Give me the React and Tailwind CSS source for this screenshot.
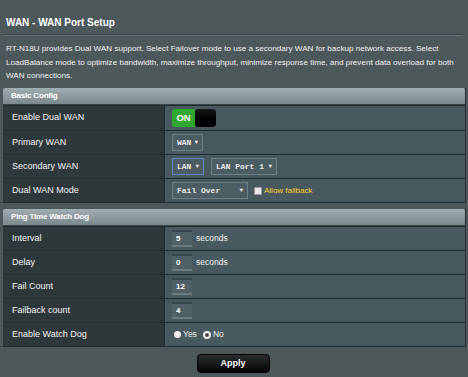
import React from "react";

function Row({ label, children, h = "h-[24px]" }) {
  return (
    <div className={`flex ${h} border-t border-[#222b2e]`}>
      <div className="w-[162px] shrink-0 bg-[#2e383b] flex items-center pl-[9px] text-[9px] text-[#f2f2f2] border-r border-[#222b2e]">
        {label}
      </div>
      <div className="flex-1 bg-[#485a5f] flex items-center pl-[7px] gap-[7px]">{children}</div>
    </div>
  );
}

function Header({ title }) {
  return (
    <div className="h-[17px] bg-gradient-to-b from-[#a0adb1] to-[#7b898d] flex items-center pl-[8px] text-[8px] tracking-[-0.2px] font-bold text-white rounded-t-[2px] border-b border-[#3a4447]">
      {title}
    </div>
  );
}

const Sel = ({ children, w, blue }) => (
  <div
    className={`h-[17px] ${w} ${blue ? "border-[#5c86c4]" : "border-[#6e8086]"} border bg-[#4c5e63] flex items-center justify-between pl-[4px] pr-[4px] font-['Liberation_Mono'] text-[8px] font-bold text-[#e8e8e8] whitespace-nowrap`}
  >
    <span>{children}</span>
    <span className="text-[6px]">▼</span>
  </div>
);

const Inp = ({ v }) => (
  <div className="h-[17px] w-[20px] bg-[#4f6166] border-t-2 border-t-[#37464a] border-b-2 border-b-[#6b7c80] flex items-center pl-[4px] text-[8px] font-bold text-white">
    {v}
  </div>
);

export default function App() {
  return (
    <div className="w-[468px] h-[377px] bg-[#4d585b] font-['Liberation_Sans',Arial,sans-serif] text-white overflow-hidden">
      <div className="pt-[17px] pl-[6px] text-[10px] font-bold leading-[12px] h-[34px]">WAN - WAN Port Setup</div>
      <div className="mx-[5px] h-[2px] bg-[#3a4447] border-b border-[#6a7478]"></div>
      <div className="pl-[6px] pt-[6px] text-[8.1px] leading-[13.5px] text-[#f0f0f0] h-[52px] whitespace-nowrap">
        RT-N18U provides Dual WAN support. Select Failover mode to use a secondary WAN for backup network access. Select
        <br />
        LoadBalance mode to optimize bandwidth, maximize throughput, minimize response time, and prevent data overload for both
        <br />
        WAN connections.
      </div>

      <div className="ml-[3px] w-[463px] border-r border-b border-[#222b2e]">
        <Header title="Basic Config" />
        <Row label="Enable Dual WAN" h="h-[25px]">
          <div className="flex h-[18px] w-[44px] rounded-[3px] overflow-hidden">
            <div className="w-[23px] bg-[#2fa82f] flex items-center justify-center text-[9.5px] font-bold text-white">ON</div>
            <div className="flex-1 bg-gradient-to-b from-[#1a1a1a] to-[#000] rounded-[3px]"></div>
          </div>
        </Row>
        <Row label="Primary WAN">
          <Sel w="w-[31px]">WAN</Sel>
        </Row>
        <Row label="Secondary WAN">
          <Sel w="w-[32px]" blue>LAN</Sel>
          <Sel w="w-[66px]">LAN Port 1</Sel>
        </Row>
        <Row label="Dual WAN Mode">
          <Sel w="w-[76px]">Fail Over</Sel>
          <div className="flex items-center -ml-[1px]">
            <div className="w-[8px] h-[8px] bg-[#e8e8e8] border border-[#999] rounded-[1px]"></div>
            <span className="ml-[2px] text-[8px] text-[#ffcc33]">Allow failback</span>
          </div>
        </Row>
      </div>

      <div className="ml-[3px] mt-[6px] w-[463px] border-r border-b border-[#222b2e]">
        <Header title="Ping Time Watch Dog" />
        <Row label="Interval">
          <Inp v="5" />
          <span className="-ml-[3px] text-[8.5px] text-[#eee] self-start mt-[5px]">seconds</span>
        </Row>
        <Row label="Delay">
          <Inp v="0" />
          <span className="-ml-[3px] text-[8.5px] text-[#eee] self-start mt-[5px]">seconds</span>
        </Row>
        <Row label="Fail Count">
          <Inp v="12" />
        </Row>
        <Row label="Failback count">
          <Inp v="4" />
        </Row>
        <Row label="Enable Watch Dog">
          <div className="flex items-center gap-[2px] ml-[2px]">
            <div className="w-[7px] h-[7px] rounded-full bg-[#f0f0f0]"></div>
            <span className="text-[8.5px] text-[#eee]">Yes</span>
            <div className="ml-[4px] w-[8px] h-[8px] rounded-full border-[2px] border-[#f0f0f0] bg-[#485a5f] flex items-center justify-center">
              <div className="w-[2px] h-[2px] rounded-full bg-[#333]"></div>
            </div>
            <span className="text-[8.5px] text-[#eee]">No</span>
          </div>
        </Row>
      </div>

      <div className="flex justify-center mt-[7px] pr-[2px]">
        <div className="w-[73px] h-[19px] rounded-[4px] bg-gradient-to-b from-[#2a2f31] to-[#050505] flex items-center justify-center text-[9px] font-bold text-white border border-[#000]">
          Apply
        </div>
      </div>
    </div>
  );
}
